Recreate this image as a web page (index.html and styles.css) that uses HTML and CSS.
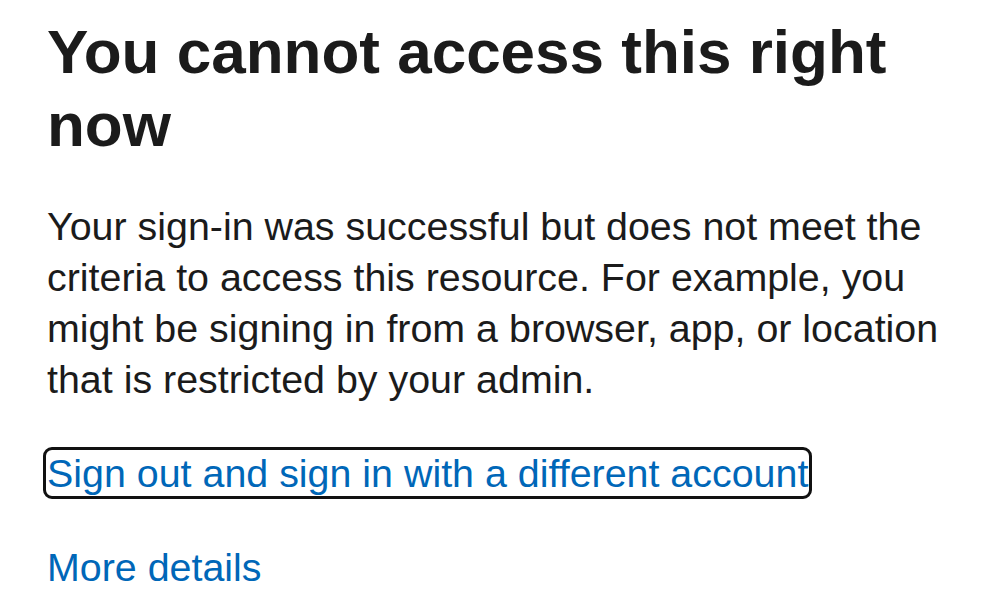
FILE: index.html
```html
<!DOCTYPE html>
<html lang="en">
<head>
<meta charset="utf-8">
<title>You cannot access this right now</title>
<link rel="stylesheet" href="styles.css">
</head>
<body>
<main class="page">
  <h1 class="title">You cannot access this right now</h1>
  <p class="message">Your sign-in was successful but does not meet the criteria to access this resource. For example, you might be signing in from a browser, app, or location that is restricted by your admin.</p>
  <div class="action"><a class="link focused" href="#">Sign out and sign in with a different account</a></div>
  <div class="action"><a class="link" href="#">More details</a></div>
</main>
</body>
</html>
```

FILE: styles.css
```css
html, body {
  margin: 0;
  padding: 0;
  background: #ffffff;
}

.page {
  padding: 15px 30px 0 47px;
  font-family: "Liberation Sans", Arial, Helvetica, sans-serif;
  color: #1b1b1b;
}

.title {
  margin: 0;
  font-size: 62px;
  line-height: 73px;
  font-weight: 700;
  color: #1b1b1b;
}

.message {
  margin: 40px 0 0 0;
  font-size: 39.4px;
  line-height: 51px;
  max-width: 905px;
}

.action {
  margin-top: 43px;
  font-size: 39.4px;
  line-height: 51px;
}

.link {
  color: #0067b8;
  text-decoration: none;
}

.link.focused {
  outline: 3px solid #111111;
  outline-offset: 1px;
  border-radius: 5px;
}
```
